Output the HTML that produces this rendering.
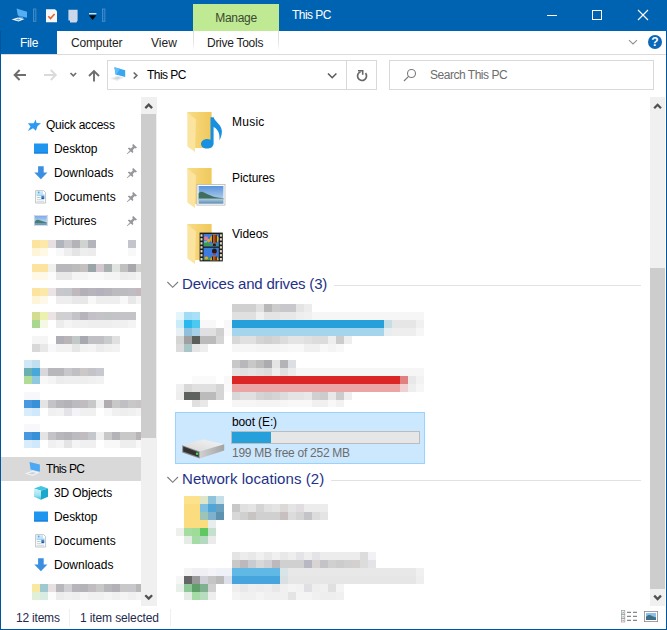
<!DOCTYPE html>
<html lang="en">
<head>
<meta charset="utf-8">
<title>This PC</title>
<style>
*{box-sizing:border-box;margin:0;padding:0}
html,body{width:667px;height:630px;overflow:hidden;background:#fff}
body{font-family:"Liberation Sans",sans-serif;font-size:12px;color:#000;position:relative}
.abs{position:absolute}
.t{position:absolute;white-space:nowrap;line-height:16px;height:16px}
#win{position:absolute;left:0;top:0;width:667px;height:630px;background:#fff;overflow:hidden}
#title{left:0;top:0;width:667px;height:31px;background:#0063b1}
#filetab{left:0;top:31px;width:57px;height:23px;background:#0063b1}
#manage{left:193px;top:4px;width:86px;height:27px;background:#bfe992}
#bl{left:0;top:31px;width:1px;height:599px;background:#00559f}
#br{left:666px;top:31px;width:1px;height:599px;background:#00559f}
#bb{left:0;top:629px;width:667px;height:1px;background:#00559f}
.line{position:absolute;background:#e2e2e2}
.box{position:absolute;border:1px solid #d9d9d9;background:#fff}
.nav .t{color:#000}
.hdr{position:absolute;white-space:nowrap;color:#1e3287;font-size:15px;line-height:20px;height:20px}
svg{position:absolute;overflow:visible}
</style>
</head>
<body>
<div id="win">
<!-- title bar -->
<div id="title" class="abs"></div>
<div id="manage" class="abs"></div>
<div class="t" style="left:215px;top:10px;color:#3b4a33;width:42px;text-align:center;letter-spacing:-0.295px">Manage</div>
<div class="t" style="left:292px;top:7px;color:#fff;letter-spacing:-0.548px">This PC</div>
<!-- QAT icons -->
<svg style="left:0;top:0" width="120" height="31" viewBox="0 0 120 31">
 <!-- pc icon -->
 <path d="M16.6 8.5 L27 11.7 L27 17.8 L17.8 15.6 Z" fill="#56aef2"/>
 <path d="M19.4 16 L23.4 17 L22.6 18.6 L18.8 17.8 Z" fill="#4a9be0"/>
 <path d="M11.6 19.6 L17.8 17.4 L24.6 18.9 L18.6 21.6 Z" fill="#f2f6fa"/>
 <path d="M15.4 19.5 L18.2 18.5 L21 19.2 L18.4 20.4 Z" fill="#6aa6de"/>
 <rect x="33.5" y="9" width="2.4" height="12.3" fill="#0f6cb8" stroke="#4f93cf" stroke-width="0.8"/>
 <!-- properties icon -->
 <path d="M46 9.2 H55 L57 11.2 V22.2 H46 Z" fill="#f6f7f9"/>
 <path d="M48.3 16.2 L50.5 18.6 L54.6 14" fill="none" stroke="#e8622a" stroke-width="1.6"/>
 <!-- new folder icon -->
 <path d="M68.4 9.8 H77.6 V20.6 L76.4 22.4 H70 V20.4 H68.4 Z" fill="#cdd7ea"/>
 <!-- dropdown -->
 <rect x="89" y="13.2" width="7.4" height="1.1" fill="#fff"/>
 <path d="M88.8 15.2 H96.4 L92.6 20 Z" fill="#0a0a0a"/>
 <rect x="102.5" y="9" width="2.4" height="12.3" fill="#0f6cb8" stroke="#4f93cf" stroke-width="0.8"/>
</svg>
<!-- window controls -->
<svg style="left:540px;top:0" width="127" height="31" viewBox="540 0 127 31">
 <rect x="547" y="15" width="10" height="1" fill="#fff"/>
 <rect x="592.5" y="10.5" width="9" height="9" fill="none" stroke="#fff" stroke-width="1"/>
 <path d="M638 10 L648 20 M648 10 L638 20" stroke="#fff" stroke-width="1.1" fill="none"/>
</svg>
<!-- ribbon tabs -->
<div id="filetab" class="abs"></div>
<div class="t" style="left:20px;top:35px;color:#fff;letter-spacing:-0.315px">File</div>
<div class="t" style="left:71px;top:35px;color:#222;letter-spacing:-0.184px">Computer</div>
<div class="t" style="left:151px;top:35px;color:#222;letter-spacing:0.034px">View</div>
<div class="t" style="left:207px;top:35px;color:#222;letter-spacing:-0.274px">Drive Tools</div>
<div class="abs" style="left:193px;top:31px;width:1px;height:20px;background:linear-gradient(#dcdcdc,#e6e6e6 60%,#fff)"></div>
<div class="abs" style="left:278px;top:31px;width:1px;height:20px;background:linear-gradient(#dcdcdc,#e6e6e6 60%,#fff)"></div>
<svg style="left:620px;top:31px" width="46" height="23" viewBox="620 31 46 23">
 <path d="M629 40.2 L633 44 L637 40.2" fill="none" stroke="#909090" stroke-width="1.1"/>
 <circle cx="655" cy="42" r="7" fill="#0b67b8"/>
 <text x="655" y="46.3" text-anchor="middle" font-family="Liberation Sans, sans-serif" font-weight="bold" font-size="12" fill="#fff">?</text>
</svg>
<div class="line" style="left:1px;top:54px;width:665px;height:1px;background:#dadbdc"></div>
<!-- address row -->
<svg style="left:0;top:55px" width="110" height="40" viewBox="0 55 110 40">
 <path d="M26 75 H15 M19.6 70 L14.6 75 L19.6 80" fill="none" stroke="#6e6e6e" stroke-width="1.9"/>
 <path d="M44 75 H55.4 M50.8 70 L55.8 75 L50.8 80" fill="none" stroke="#dadada" stroke-width="1.9"/>
 <path d="M70.5 73 L73.3 75.8 L76.1 73" fill="none" stroke="#6e6e6e" stroke-width="1.7"/>
 <path d="M94 81.4 V71.4 M89 76 L94 71 L99 76" fill="none" stroke="#6e6e6e" stroke-width="1.9"/>
</svg>
<div class="box" style="left:107px;top:60px;width:270px;height:30px"></div>
<div class="line" style="left:346px;top:61px;width:1px;height:28px;background:#d9d9d9"></div>
<svg style="left:107px;top:60px" width="270" height="30" viewBox="107 60 270 30">
 <!-- pc icon -->
 <path d="M114.4 67.2 L125.2 70.2 L125.2 76.9 L115.6 74.5 Z" fill="#38a6f3"/>
 <path d="M114.4 67.2 L120 68.8 L116.4 74.6 L115.6 74.5 Z" fill="#62bcf7"/>
 <path d="M110.2 78.4 L117.8 75.4 L124.2 77.4 L117 80.9 Z" fill="#ececee"/>
 <path d="M113.6 78.4 L117.6 76.8 L120.8 77.8 L117.2 79.5 Z" fill="#ccd6de"/>
 <path d="M133.7 72.5 L136.8 75.5 L133.7 78.5" fill="none" stroke="#6a6a6a" stroke-width="1.7"/>
 <path d="M328 73.5 L332.2 77.7 L336.4 73.5" fill="none" stroke="#5a5a5a" stroke-width="1.6"/>
 <path d="M365.5 73.1 A4.5 4.5 0 1 1 360.6 71.7" fill="none" stroke="#666" stroke-width="1.7"/>
 <path d="M358 70.7 H362.7 V74.8" fill="none" stroke="#666" stroke-width="1.6"/>
</svg>
<div class="t" style="left:147px;top:67px;letter-spacing:-0.548px">This PC</div>
<div class="box" style="left:389px;top:60px;width:265px;height:30px"></div>
<svg style="left:389px;top:60px" width="60" height="30" viewBox="389 60 60 30">
 <circle cx="411.5" cy="73.5" r="4" fill="none" stroke="#7a7a7a" stroke-width="1.1"/>
 <path d="M408.6 76.4 L404 81" stroke="#7a7a7a" stroke-width="1.2"/>
</svg>
<div class="t" style="left:430px;top:67px;color:#6d6d6d;letter-spacing:-0.478px">Search This PC</div>

<!-- nav pane -->
<div class="abs" style="left:1px;top:457px;width:140px;height:24px;background:#d9d9d9"></div>
<div class="abs" style="left:141px;top:97px;width:16px;height:509px;background:#f0f0f0"></div>
<div class="abs" style="left:141px;top:114px;width:15px;height:324px;background:#cdcdcd"></div>
<svg style="left:141px;top:97px" width="16" height="509" viewBox="141 97 16 509">
 <path d="M145.3 108.1 L148.7 104.7 L152.1 108.1" fill="none" stroke="#505050" stroke-width="2.3"/>
 <path d="M145.3 595.2 L148.7 598.6 L152.1 595.2" fill="none" stroke="#505050" stroke-width="2.3"/>
</svg>
<div class="nav">
<div class="t" style="left:46px;top:117px;letter-spacing:-0.224px">Quick access</div>
<div class="t" style="left:54px;top:141px;letter-spacing:-0.105px">Desktop</div>
<div class="t" style="left:54px;top:165px;letter-spacing:0.003px">Downloads</div>
<div class="t" style="left:54px;top:189px;letter-spacing:0.125px">Documents</div>
<div class="t" style="left:54px;top:213px;letter-spacing:-0.137px">Pictures</div>
<div class="t" style="left:46px;top:461px;letter-spacing:-0.615px">This PC</div>
<div class="t" style="left:54px;top:485px;letter-spacing:-0.129px">3D Objects</div>
<div class="t" style="left:54px;top:509px;letter-spacing:-0.105px">Desktop</div>
<div class="t" style="left:54px;top:533px;letter-spacing:0.125px">Documents</div>
<div class="t" style="left:54px;top:557px;letter-spacing:0.003px">Downloads</div>
</div>
<svg style="left:0;top:0" width="160" height="630" viewBox="0 0 160 630">
<!-- star -->
<path d="M35.5 119.4 L36.6 123.1 L41 123.2 L37.6 126 L35.9 130.8 L33.1 128.3 L27.9 131 L30.5 126.4 L27.9 123.2 L33.8 123.2 Z" fill="#2b9af0"/>
<!-- desktop -->
<rect x="34" y="143.5" width="14" height="10" fill="#1e96f0"/><rect x="34" y="152.3" width="14" height="1.2" fill="#167fd6"/>
<rect x="34" y="511.5" width="14" height="10" fill="#1e96f0"/><rect x="34" y="520.3" width="14" height="1.2" fill="#167fd6"/>
<!-- downloads -->
<path d="M38.1 166.2 H43.7 V172.6 H47.4 L40.9 179.3 L34.3 172.6 H38.1 Z" fill="#3c8fe0"/>
<path d="M38.1 558.2 H43.7 V564.6 H47.4 L40.9 571.3 L34.3 564.6 H38.1 Z" fill="#3c8fe0"/>
<!-- documents -->
<g id="doc"><path d="M35.6 190.6 H43.6 L45.6 192.6 V203 H35.6 Z" fill="#fafcfe" stroke="#b4b8bc" stroke-width="0.8"/>
<rect x="36.4" y="191.4" width="6.6" height="3" fill="#c4e4f8"/><rect x="38" y="191.6" width="1.4" height="1.6" fill="#5c9cdc"/><rect x="36.6" y="194.6" width="7.8" height="1.1" fill="#7cc8e8"/><rect x="41.2" y="195.8" width="3.2" height="3.2" fill="#4c8cd0"/><rect x="42" y="197.6" width="1.6" height="1.4" fill="#1c4c8c"/><rect x="37" y="197" width="3.6" height="0.9" fill="#b4c4c8"/><rect x="37" y="199" width="7" height="0.9" fill="#c8d4dc"/><rect x="37" y="200.8" width="7" height="0.9" fill="#c8d4dc"/></g>
<use href="#doc" y="344"/>
<!-- pictures -->
<defs><linearGradient id="nsky" x1="0" x2="0" y1="0" y2="1"><stop offset="0" stop-color="#7cacec"/><stop offset="1" stop-color="#d8e8f4"/></linearGradient></defs>
<rect x="34.3" y="215.5" width="13.4" height="10.2" fill="#f4f6f8" stroke="#c8ccd4" stroke-width="0.7"/>
<rect x="34.8" y="216" width="12" height="9" fill="url(#nsky)"/>
<path d="M34.8 221.4 C36.4 219.2 38.4 219.2 40.4 220.6 L46.8 222.6 V223.6 H34.8 Z" fill="#4c7c6c"/>
<rect x="34.8" y="223" width="12" height="2" fill="#6c9cc0"/>
<!-- pins -->
<g id="pin" fill="#96969b"><path d="M133.2 143.9 L137 147.4 L135.8 148.6 L134.7 148.1 L132.7 150.1 L133.4 152 L132.4 152.9 L127.9 148.6 L128.9 147.6 L130.9 148.4 L132.9 146.4 L132.2 145.1 Z"/><path d="M130.3 150.2 L131 150.9 L127 154 Z" stroke="#96969b" stroke-width="0.5"/></g>
<use href="#pin" y="24"/><use href="#pin" y="48"/><use href="#pin" y="72"/>
<!-- this pc -->
<path d="M29.5 462 L39.9 464.5 L39.9 471.8 L30.6 469.4 Z" fill="#4aa8f4"/>
<path d="M24.8 473.6 L32.6 470.6 L39.6 472.6 L32.6 476 Z" fill="#eef0f2"/>
<path d="M28.4 473.6 L32.6 472 L36 473 L32.4 474.6 Z" fill="#c4d4e0"/>
<!-- 3d objects -->
<defs><linearGradient id="cubeL" x1="0" x2="0" y1="0" y2="1"><stop offset="0" stop-color="#d0f4fa"/><stop offset="0.6" stop-color="#a0e4f0"/><stop offset="1" stop-color="#38bcd4"/></linearGradient></defs>
<path d="M34 488.4 L41 486 L48 488.4 L41 490.8 Z" fill="#44c4e0"/>
<path d="M34 488.4 L41 490.8 V499.7 L34 496.8 Z" fill="url(#cubeL)"/>
<path d="M48 488.4 L41 490.8 V499.7 L48 496.8 Z" fill="#1ca8cc"/>
</svg>

<!-- main pane -->
<div class="abs" style="left:650px;top:97px;width:15px;height:509px;background:#f0f0f0"></div>
<div class="abs" style="left:650px;top:268px;width:15px;height:321px;background:#cdcdcd"></div>
<svg style="left:650px;top:97px" width="15" height="509" viewBox="650 97 15 509">
 <path d="M654.2 108.2 L657.6 104.8 L661 108.2" fill="none" stroke="#505050" stroke-width="2.3"/>
 <path d="M654.2 595.6 L657.6 599 L661 595.6" fill="none" stroke="#505050" stroke-width="2.3"/>
</svg>
<div class="t" style="left:232px;top:114px;letter-spacing:0.239px">Music</div>
<div class="t" style="left:232px;top:170px;letter-spacing:-0.080px">Pictures</div>
<div class="t" style="left:232px;top:226px;letter-spacing:-0.037px">Videos</div>
<div class="abs" style="left:175px;top:412px;width:250px;height:52px;background:#cce8ff;border:1px solid #99d1ff"></div>
<svg style="left:0;top:0" width="667" height="630" viewBox="0 0 667 630">
<g transform="translate(187,112)">
 <defs><linearGradient id="fg187112" x1="0" x2="1" y1="0" y2="0"><stop offset="0" stop-color="#f8dc84"/><stop offset="1" stop-color="#f0c85c"/></linearGradient></defs>
 <path d="M0.4 0 H24.6 V36 H6 Z" fill="url(#fg187112)"/>
 <path d="M0.4 0 L9 7.5 L8 40 L0.4 34.5 Z" fill="#fbe3a0"/>
</g><g transform="translate(187,168)">
 <defs><linearGradient id="fg187168" x1="0" x2="1" y1="0" y2="0"><stop offset="0" stop-color="#f8dc84"/><stop offset="1" stop-color="#f0c85c"/></linearGradient></defs>
 <path d="M0.4 0 H24.6 V36 H6 Z" fill="url(#fg187168)"/>
 <path d="M0.4 0 L9 7.5 L8 40 L0.4 34.5 Z" fill="#fbe3a0"/>
</g><g transform="translate(187,224)">
 <defs><linearGradient id="fg187224" x1="0" x2="1" y1="0" y2="0"><stop offset="0" stop-color="#f8dc84"/><stop offset="1" stop-color="#f0c85c"/></linearGradient></defs>
 <path d="M0.4 0 H24.6 V36 H6 Z" fill="url(#fg187224)"/>
 <path d="M0.4 0 L9 7.5 L8 40 L0.4 34.5 Z" fill="#fbe3a0"/>
</g>
<path d="M210.5 117.2 L213.6 117.2 C214.5 121.5 221.9 124.5 221.9 131.5 C221.9 135 220.8 138 219.3 140.2 C220.2 135.5 218.8 129.5 213.6 127 L213.6 143.5 C213.6 146.5 210.5 148.6 206.8 148.6 C203.4 148.6 201 146.6 201 144 C201 141.2 203.8 139 207.2 139 C208.5 139 209.6 139.3 210.5 139.8 Z" fill="#1790e0"/>

<rect x="197" y="184.5" width="28" height="20.6" fill="#fdfdfd" stroke="#b4b8bc" stroke-width="0.8"/>
<defs><linearGradient id="sky" x1="0" x2="0" y1="0" y2="1"><stop offset="0" stop-color="#5a94dc"/><stop offset="1" stop-color="#cce0f0"/></linearGradient>
<linearGradient id="wat" x1="0" x2="0" y1="0" y2="1"><stop offset="0" stop-color="#b4d0e4"/><stop offset="1" stop-color="#5c8cb4"/></linearGradient>
<clipPath id="f1"><rect x="203.6" y="234" width="15.2" height="12.4"/></clipPath><clipPath id="f2"><rect x="203.6" y="247.8" width="15.2" height="12.4"/></clipPath></defs>
<rect x="198.6" y="186" width="24.8" height="17.6" fill="url(#sky)"/>
<path d="M198.6 193.4 C200 191.6 202 191.4 204 192.6 C208 194.6 212 196.6 216 197.2 L223.4 198.2 V199.4 H198.6 Z" fill="#3f6f5c"/>
<rect x="198.6" y="198.6" width="24.8" height="5" fill="url(#wat)"/>

<rect x="199.6" y="232.6" width="23.2" height="28.8" fill="#1c1c1c"/>
<rect x="203.6" y="234" width="15.2" height="12.4" fill="#3c7ce0"/>
<rect x="203.6" y="247.8" width="15.2" height="12.4" fill="#3c7ce0"/>
<g clip-path="url(#f1)">
<path d="M203.6 243 L207 241.6 L210 244 L213 245.4 L218.8 245 V246.4 H203.6 Z" fill="#3c9c4c"/>
<ellipse cx="206" cy="238.4" rx="2" ry="2.2" fill="#e87888"/><ellipse cx="208.6" cy="240.6" rx="1.6" ry="1.8" fill="#f0a030"/><rect x="204" y="241" width="3" height="1.6" fill="#58c8d8"/>
<ellipse cx="214.4" cy="238.8" rx="4.3" ry="4.4" fill="#f0b418"/>
<rect x="211.9" y="234.8" width="1.5" height="8" fill="#2c1c10"/><rect x="215.3" y="234.8" width="1.5" height="8" fill="#2c1c10"/><rect x="213.7" y="234.4" width="1.3" height="8.8" fill="#d83818"/>
<rect x="213" y="243.6" width="2.8" height="2.4" fill="#281810"/>
</g>
<g clip-path="url(#f2)">
<path d="M203.6 257.4 L207 256 L210 258.2 L218.8 259.4 V260.2 H203.6 Z" fill="#3c9c4c"/>
<ellipse cx="214.4" cy="251" rx="2.4" ry="2.6" fill="#281810"/><rect x="213.4" y="253" width="2" height="2" fill="#c83020"/>
<ellipse cx="214.4" cy="260.6" rx="4.3" ry="4.4" fill="#f0b418"/><rect x="211.9" y="256.4" width="1.5" height="5" fill="#2c1c10"/><rect x="215.3" y="256.4" width="1.5" height="5" fill="#2c1c10"/><rect x="213.7" y="256.2" width="1.3" height="5" fill="#d83818"/>
<ellipse cx="206.4" cy="258" rx="1.8" ry="1.6" fill="#f0a030"/>
</g>
<rect x="200.5" y="234.3" width="2" height="2.3" fill="#e8dcb8"/><rect x="219.9" y="234.3" width="2" height="2.3" fill="#e8dcb8"/>
<rect x="200.5" y="238.2" width="2" height="2.3" fill="#e8dcb8"/><rect x="219.9" y="238.2" width="2" height="2.3" fill="#e8dcb8"/>
<rect x="200.5" y="242.2" width="2" height="2.3" fill="#e8dcb8"/><rect x="219.9" y="242.2" width="2" height="2.3" fill="#e8dcb8"/>
<rect x="200.5" y="246.2" width="2" height="2.3" fill="#e8dcb8"/><rect x="219.9" y="246.2" width="2" height="2.3" fill="#e8dcb8"/>
<rect x="200.5" y="250.1" width="2" height="2.3" fill="#e8dcb8"/><rect x="219.9" y="250.1" width="2" height="2.3" fill="#e8dcb8"/>
<rect x="200.5" y="254.1" width="2" height="2.3" fill="#e8dcb8"/><rect x="219.9" y="254.1" width="2" height="2.3" fill="#e8dcb8"/>
<rect x="200.5" y="258.0" width="2" height="2.3" fill="#e8dcb8"/><rect x="219.9" y="258.0" width="2" height="2.3" fill="#e8dcb8"/>

<defs><linearGradient id="dtop" x1="0" x2="1" y1="1" y2="0"><stop offset="0" stop-color="#d8d8d8"/><stop offset="1" stop-color="#f4f4f4"/></linearGradient>
<linearGradient id="dside" x1="0" x2="1" y1="0" y2="0"><stop offset="0" stop-color="#d0d0d0"/><stop offset="1" stop-color="#a4a4a4"/></linearGradient></defs>
<path d="M182.2 445.2 L203 439.6 L224.2 444.3 L199.7 451.5 Z" fill="url(#dtop)"/>
<path d="M199.7 451.5 L224.2 444.3 L224.2 450.6 L199.7 458.6 Z" fill="url(#dside)"/>
<path d="M182.2 445.2 L199.7 451.5 L199.7 458.6 L182.2 452.6 Z" fill="#8a8a8a"/>
<path d="M183.2 446.6 L198.7 452.2 L198.7 457 L183.2 451.6 Z" fill="#333"/>
<rect x="196" y="452.6" width="2.2" height="2.2" fill="#48e048"/>
</svg>
<div class="hdr" style="left:182px;top:274px;letter-spacing:-0.187px">Devices and drives (3)</div>
<div class="line" style="left:334px;top:285px;width:307px;height:1px"></div>
<div class="hdr" style="left:182px;top:469px;letter-spacing:0.065px">Network locations (2)</div>
<div class="line" style="left:331px;top:480px;width:310px;height:1px"></div>
<svg style="left:160px;top:270px" width="30" height="230" viewBox="160 270 30 230">
 <path d="M167.4 282 L172.7 287.3 L178 282" fill="none" stroke="#7a7a7a" stroke-width="1.1"/>
 <path d="M167.4 477 L172.7 482.3 L178 477" fill="none" stroke="#7a7a7a" stroke-width="1.1"/>
</svg>
<!-- selected drive -->
<div class="t" style="left:232px;top:414px;letter-spacing:-0.116px">boot (E:)</div>
<div class="abs" style="left:231px;top:431px;width:189px;height:13px;background:#e6e6e6;border:1px solid #bcbcbc"></div>
<div class="abs" style="left:232px;top:432px;width:39px;height:11px;background:#26a0da"></div>
<div class="t" style="left:232px;top:445px;color:#6d6d6d;letter-spacing:-0.265px">199 MB free of 252 MB</div>
<svg style="left:0;top:0" width="667" height="630" viewBox="0 0 667 630" shape-rendering="crispEdges">
<rect x="32" y="240" width="8" height="8" fill="#fce4a0"/>
<rect x="40" y="240" width="8" height="8" fill="#fce8a8"/>
<rect x="48" y="240" width="8" height="8" fill="#e8e0e0"/>
<rect x="56" y="240" width="8" height="8" fill="#b0b4bc"/>
<rect x="64" y="240" width="8" height="8" fill="#c8c8cc"/>
<rect x="72" y="240" width="8" height="8" fill="#b4b4b8"/>
<rect x="80" y="240" width="8" height="8" fill="#d0d4d0"/>
<rect x="88" y="240" width="8" height="8" fill="#b4b4bc"/>
<rect x="128" y="240" width="8" height="8" fill="#c4c4cc"/>
<rect x="32" y="248" width="8" height="8" fill="#fef4d8"/>
<rect x="40" y="248" width="8" height="8" fill="#fef8e4"/>
<rect x="56" y="248" width="8" height="8" fill="#f8f8f8"/>
<rect x="64" y="248" width="8" height="8" fill="#eeeeee"/>
<rect x="72" y="248" width="8" height="8" fill="#e4e4e4"/>
<rect x="80" y="248" width="8" height="8" fill="#eeeeee"/>
<rect x="88" y="248" width="8" height="8" fill="#ececec"/>
<rect x="128" y="248" width="8" height="8" fill="#f8f8f8"/>
<rect x="32" y="264" width="8" height="8" fill="#fce4a0"/>
<rect x="40" y="264" width="8" height="8" fill="#fce4a0"/>
<rect x="48" y="264" width="8" height="8" fill="#f0f0ec"/>
<rect x="56" y="264" width="8" height="8" fill="#b8b8bc"/>
<rect x="64" y="264" width="8" height="8" fill="#b8b8bc"/>
<rect x="72" y="264" width="8" height="8" fill="#bcbcbc"/>
<rect x="80" y="264" width="8" height="8" fill="#c4c0c0"/>
<rect x="88" y="264" width="8" height="8" fill="#98a4a8"/>
<rect x="96" y="264" width="8" height="8" fill="#d4c8d0"/>
<rect x="104" y="264" width="8" height="8" fill="#a8b0b0"/>
<rect x="112" y="264" width="8" height="8" fill="#e0e4e0"/>
<rect x="120" y="264" width="8" height="8" fill="#c0c0c0"/>
<rect x="128" y="264" width="8" height="8" fill="#a8a8ac"/>
<rect x="136" y="264" width="5" height="8" fill="#d0d0cc"/>
<rect x="32" y="272" width="8" height="8" fill="#fef8e4"/>
<rect x="40" y="272" width="8" height="8" fill="#fef8e8"/>
<rect x="48" y="272" width="8" height="8" fill="#fcfcfc"/>
<rect x="56" y="272" width="8" height="8" fill="#e8e8e8"/>
<rect x="64" y="272" width="8" height="8" fill="#e8e8e8"/>
<rect x="72" y="272" width="8" height="8" fill="#f4f4f4"/>
<rect x="80" y="272" width="8" height="8" fill="#f4f4f4"/>
<rect x="88" y="272" width="8" height="8" fill="#f8f8f8"/>
<rect x="96" y="272" width="8" height="8" fill="#f8f8f8"/>
<rect x="104" y="272" width="8" height="8" fill="#f4f4f4"/>
<rect x="112" y="272" width="8" height="8" fill="#f4f4f4"/>
<rect x="120" y="272" width="8" height="8" fill="#ececec"/>
<rect x="128" y="272" width="8" height="8" fill="#eeeeee"/>
<rect x="136" y="272" width="5" height="8" fill="#f4f4f4"/>
<rect x="32" y="288" width="8" height="8" fill="#fce4a0"/>
<rect x="40" y="288" width="8" height="8" fill="#fce8a8"/>
<rect x="48" y="288" width="8" height="8" fill="#ece4e4"/>
<rect x="56" y="288" width="8" height="8" fill="#c8c8cc"/>
<rect x="64" y="288" width="8" height="8" fill="#c4c8cc"/>
<rect x="72" y="288" width="8" height="8" fill="#c0b8bc"/>
<rect x="80" y="288" width="8" height="8" fill="#b4b0b8"/>
<rect x="88" y="288" width="8" height="8" fill="#b8b4bc"/>
<rect x="96" y="288" width="8" height="8" fill="#b4b0bc"/>
<rect x="104" y="288" width="8" height="8" fill="#b8b4bc"/>
<rect x="112" y="288" width="8" height="8" fill="#bcbcc0"/>
<rect x="120" y="288" width="8" height="8" fill="#bcbcc0"/>
<rect x="128" y="288" width="8" height="8" fill="#c0bcc4"/>
<rect x="136" y="288" width="5" height="8" fill="#c4b8bc"/>
<rect x="32" y="296" width="8" height="8" fill="#fef4d8"/>
<rect x="40" y="296" width="8" height="8" fill="#fef8e8"/>
<rect x="56" y="296" width="8" height="8" fill="#eeeeee"/>
<rect x="64" y="296" width="8" height="8" fill="#eeeeee"/>
<rect x="72" y="296" width="8" height="8" fill="#e8e8e8"/>
<rect x="80" y="296" width="8" height="8" fill="#e8e8e8"/>
<rect x="88" y="296" width="8" height="8" fill="#f8f8f8"/>
<rect x="96" y="296" width="8" height="8" fill="#eeeeee"/>
<rect x="104" y="296" width="8" height="8" fill="#eeeeee"/>
<rect x="112" y="296" width="8" height="8" fill="#eeeeee"/>
<rect x="120" y="296" width="8" height="8" fill="#f8f8f8"/>
<rect x="128" y="296" width="8" height="8" fill="#e8e8e8"/>
<rect x="136" y="296" width="5" height="8" fill="#f4f4f4"/>
<rect x="32" y="312" width="8" height="8" fill="#d4dc90"/>
<rect x="40" y="312" width="8" height="8" fill="#ecf0b0"/>
<rect x="48" y="312" width="8" height="8" fill="#ece4e4"/>
<rect x="56" y="312" width="8" height="8" fill="#d0d0d0"/>
<rect x="64" y="312" width="8" height="8" fill="#d0d0d4"/>
<rect x="72" y="312" width="8" height="8" fill="#c4c4c8"/>
<rect x="80" y="312" width="8" height="8" fill="#b8b4bc"/>
<rect x="88" y="312" width="8" height="8" fill="#c4c0c8"/>
<rect x="96" y="312" width="8" height="8" fill="#c4c4c8"/>
<rect x="104" y="312" width="8" height="8" fill="#c0c4c4"/>
<rect x="112" y="312" width="8" height="8" fill="#c4c4c8"/>
<rect x="120" y="312" width="8" height="8" fill="#c4c4c8"/>
<rect x="128" y="312" width="8" height="8" fill="#c4c4c8"/>
<rect x="32" y="320" width="8" height="8" fill="#a8d890"/>
<rect x="40" y="320" width="8" height="8" fill="#f4f8e4"/>
<rect x="56" y="320" width="8" height="8" fill="#ececec"/>
<rect x="64" y="320" width="8" height="8" fill="#f4f4f4"/>
<rect x="72" y="320" width="8" height="8" fill="#f0f0f0"/>
<rect x="80" y="320" width="8" height="8" fill="#f0f0f0"/>
<rect x="88" y="320" width="8" height="8" fill="#eeeeee"/>
<rect x="96" y="320" width="8" height="8" fill="#eeeeee"/>
<rect x="104" y="320" width="8" height="8" fill="#eeeeee"/>
<rect x="112" y="320" width="8" height="8" fill="#f0f0f0"/>
<rect x="120" y="320" width="8" height="8" fill="#f0f0f0"/>
<rect x="128" y="320" width="8" height="8" fill="#f4f4f4"/>
<rect x="32" y="336" width="8" height="8" fill="#f5f5f5"/>
<rect x="40" y="336" width="8" height="8" fill="#f5f5f5"/>
<rect x="56" y="336" width="8" height="8" fill="#b0afb8"/>
<rect x="64" y="336" width="8" height="8" fill="#b8b4b8"/>
<rect x="72" y="336" width="8" height="8" fill="#c0c8c8"/>
<rect x="80" y="336" width="8" height="8" fill="#a8a8b0"/>
<rect x="88" y="336" width="8" height="8" fill="#c0c0c4"/>
<rect x="96" y="336" width="8" height="8" fill="#c0c0c4"/>
<rect x="104" y="336" width="8" height="8" fill="#c8cccc"/>
<rect x="112" y="336" width="8" height="8" fill="#e0e0e0"/>
<rect x="32" y="344" width="8" height="8" fill="#d8d8d8"/>
<rect x="40" y="344" width="8" height="8" fill="#e8e8e8"/>
<rect x="48" y="344" width="8" height="8" fill="#f8f8f8"/>
<rect x="56" y="344" width="8" height="8" fill="#f2f2f2"/>
<rect x="64" y="344" width="8" height="8" fill="#f2f2f2"/>
<rect x="72" y="344" width="8" height="8" fill="#e6e6e6"/>
<rect x="80" y="344" width="8" height="8" fill="#f2f2f2"/>
<rect x="88" y="344" width="8" height="8" fill="#f4f4f4"/>
<rect x="96" y="344" width="8" height="8" fill="#ececec"/>
<rect x="104" y="344" width="8" height="8" fill="#f0f0f0"/>
<rect x="112" y="344" width="8" height="8" fill="#f2f2f2"/>
<rect x="24" y="360" width="8" height="8" fill="#d0e8f5"/>
<rect x="32" y="360" width="8" height="8" fill="#c0e0f0"/>
<rect x="24" y="368" width="8" height="8" fill="#6ab0b0"/>
<rect x="32" y="368" width="8" height="8" fill="#48a8d8"/>
<rect x="40" y="368" width="8" height="8" fill="#d8d8dc"/>
<rect x="48" y="368" width="8" height="8" fill="#b8b8bc"/>
<rect x="56" y="368" width="8" height="8" fill="#b8b8bc"/>
<rect x="64" y="368" width="8" height="8" fill="#c8c8cc"/>
<rect x="72" y="368" width="8" height="8" fill="#c0c0c4"/>
<rect x="80" y="368" width="8" height="8" fill="#ccc8c8"/>
<rect x="88" y="368" width="8" height="8" fill="#c4c4c8"/>
<rect x="96" y="368" width="8" height="8" fill="#c8c8d0"/>
<rect x="24" y="376" width="8" height="8" fill="#b0dc98"/>
<rect x="32" y="376" width="8" height="8" fill="#90c8e0"/>
<rect x="40" y="376" width="8" height="8" fill="#f8f8f8"/>
<rect x="48" y="376" width="8" height="8" fill="#f4f4f4"/>
<rect x="56" y="376" width="8" height="8" fill="#ececec"/>
<rect x="64" y="376" width="8" height="8" fill="#eeeeee"/>
<rect x="72" y="376" width="8" height="8" fill="#eeeeee"/>
<rect x="80" y="376" width="8" height="8" fill="#eeeeee"/>
<rect x="88" y="376" width="8" height="8" fill="#f0f0f0"/>
<rect x="96" y="376" width="8" height="8" fill="#f2f2f2"/>
<rect x="24" y="392" width="8" height="8" fill="#f8f8fc"/>
<rect x="32" y="392" width="8" height="8" fill="#f8f8fc"/>
<rect x="24" y="400" width="8" height="8" fill="#4898e0"/>
<rect x="32" y="400" width="8" height="8" fill="#3890d8"/>
<rect x="40" y="400" width="8" height="8" fill="#e4e4e4"/>
<rect x="48" y="400" width="8" height="8" fill="#c4c4c8"/>
<rect x="56" y="400" width="8" height="8" fill="#b8b8bc"/>
<rect x="64" y="400" width="8" height="8" fill="#b4b4b8"/>
<rect x="72" y="400" width="8" height="8" fill="#bcbcc0"/>
<rect x="80" y="400" width="8" height="8" fill="#c0bcc0"/>
<rect x="88" y="400" width="8" height="8" fill="#c8c8c8"/>
<rect x="96" y="400" width="8" height="8" fill="#f0f0f0"/>
<rect x="104" y="400" width="8" height="8" fill="#b0acb0"/>
<rect x="112" y="400" width="8" height="8" fill="#c8c8c8"/>
<rect x="120" y="400" width="8" height="8" fill="#c0c0c4"/>
<rect x="128" y="400" width="8" height="8" fill="#c8c8c8"/>
<rect x="136" y="400" width="5" height="8" fill="#c8c4c4"/>
<rect x="24" y="408" width="8" height="8" fill="#d8ecfc"/>
<rect x="32" y="408" width="8" height="8" fill="#d0e8fc"/>
<rect x="48" y="408" width="8" height="8" fill="#f0f0f0"/>
<rect x="56" y="408" width="8" height="8" fill="#f2f2f2"/>
<rect x="64" y="408" width="8" height="8" fill="#e4e4e8"/>
<rect x="72" y="408" width="8" height="8" fill="#f4f4f8"/>
<rect x="80" y="408" width="8" height="8" fill="#f0f0f0"/>
<rect x="88" y="408" width="8" height="8" fill="#f0f0f0"/>
<rect x="104" y="408" width="8" height="8" fill="#f8f8f8"/>
<rect x="112" y="408" width="8" height="8" fill="#f0f0f0"/>
<rect x="120" y="408" width="8" height="8" fill="#eeeeee"/>
<rect x="128" y="408" width="8" height="8" fill="#f0f0f0"/>
<rect x="136" y="408" width="5" height="8" fill="#f4f4f4"/>
<rect x="24" y="424" width="8" height="8" fill="#f8f8fc"/>
<rect x="32" y="424" width="8" height="8" fill="#f8f8fc"/>
<rect x="24" y="432" width="8" height="8" fill="#4898e0"/>
<rect x="32" y="432" width="8" height="8" fill="#3890d8"/>
<rect x="40" y="432" width="8" height="8" fill="#e4e4e4"/>
<rect x="48" y="432" width="8" height="8" fill="#c4c4c8"/>
<rect x="56" y="432" width="8" height="8" fill="#b8b8bc"/>
<rect x="64" y="432" width="8" height="8" fill="#b4b4b8"/>
<rect x="72" y="432" width="8" height="8" fill="#bcbcc0"/>
<rect x="80" y="432" width="8" height="8" fill="#c0bcc0"/>
<rect x="88" y="432" width="8" height="8" fill="#c4c8cc"/>
<rect x="96" y="432" width="8" height="8" fill="#f0f0f0"/>
<rect x="104" y="432" width="8" height="8" fill="#c8c8c8"/>
<rect x="112" y="432" width="8" height="8" fill="#b4b4b8"/>
<rect x="120" y="432" width="8" height="8" fill="#c8c8c8"/>
<rect x="128" y="432" width="8" height="8" fill="#c8c8c8"/>
<rect x="136" y="432" width="5" height="8" fill="#b8b4b8"/>
<rect x="24" y="440" width="8" height="8" fill="#d8ecfc"/>
<rect x="32" y="440" width="8" height="8" fill="#d0e8fc"/>
<rect x="48" y="440" width="8" height="8" fill="#f0f0f0"/>
<rect x="56" y="440" width="8" height="8" fill="#f4f4f4"/>
<rect x="64" y="440" width="8" height="8" fill="#e4e4e4"/>
<rect x="72" y="440" width="8" height="8" fill="#f4f4f4"/>
<rect x="80" y="440" width="8" height="8" fill="#f0f0f0"/>
<rect x="88" y="440" width="8" height="8" fill="#f0f0f0"/>
<rect x="104" y="440" width="8" height="8" fill="#f8f8f8"/>
<rect x="112" y="440" width="8" height="8" fill="#f8f8f8"/>
<rect x="120" y="440" width="8" height="8" fill="#eeeeee"/>
<rect x="128" y="440" width="8" height="8" fill="#eeeeee"/>
<rect x="136" y="440" width="5" height="8" fill="#f8f8f8"/>
<rect x="32" y="584" width="8" height="8" fill="#f8e8a0"/>
<rect x="40" y="584" width="8" height="8" fill="#a0c8d0"/>
<rect x="48" y="584" width="8" height="8" fill="#e8e0e0"/>
<rect x="56" y="584" width="8" height="8" fill="#b8b8bc"/>
<rect x="64" y="584" width="8" height="8" fill="#d0d0d4"/>
<rect x="72" y="584" width="8" height="8" fill="#b8b4bc"/>
<rect x="80" y="584" width="8" height="8" fill="#b4b4b8"/>
<rect x="88" y="584" width="8" height="8" fill="#c0bcc0"/>
<rect x="96" y="584" width="8" height="8" fill="#c8c8c8"/>
<rect x="104" y="584" width="8" height="8" fill="#b8b8bc"/>
<rect x="112" y="584" width="8" height="8" fill="#b4b0b8"/>
<rect x="120" y="584" width="8" height="8" fill="#c8c8c8"/>
<rect x="128" y="584" width="8" height="8" fill="#c8c8cc"/>
<rect x="136" y="584" width="5" height="8" fill="#b8b8b8"/>
<rect x="32" y="592" width="8" height="8" fill="#e0f0d8"/>
<rect x="40" y="592" width="8" height="8" fill="#d8ece4"/>
<rect x="48" y="592" width="8" height="8" fill="#fcfcfc"/>
<rect x="56" y="592" width="8" height="8" fill="#ececec"/>
<rect x="64" y="592" width="8" height="8" fill="#f0f0f0"/>
<rect x="72" y="592" width="8" height="8" fill="#eeeeee"/>
<rect x="80" y="592" width="8" height="8" fill="#f4f4f4"/>
<rect x="88" y="592" width="8" height="8" fill="#f0f0f0"/>
<rect x="96" y="592" width="8" height="8" fill="#f0f0f0"/>
<rect x="104" y="592" width="8" height="8" fill="#f4f4f4"/>
<rect x="112" y="592" width="8" height="8" fill="#f0f0f0"/>
<rect x="120" y="592" width="8" height="8" fill="#f4f4f4"/>
<rect x="128" y="592" width="8" height="8" fill="#f0f0f0"/>
<rect x="136" y="592" width="5" height="8" fill="#f4f4f4"/>
<rect x="176" y="312" width="8" height="8" fill="#e4f6fc"/>
<rect x="184" y="312" width="8" height="8" fill="#a0dcf4"/>
<rect x="192" y="312" width="8" height="8" fill="#a8e0f8"/>
<rect x="176" y="320" width="8" height="8" fill="#c8ecf8"/>
<rect x="184" y="320" width="8" height="8" fill="#2bb8ee"/>
<rect x="192" y="320" width="8" height="8" fill="#4cc9f0"/>
<rect x="200" y="320" width="8" height="8" fill="#f8f8f8"/>
<rect x="208" y="320" width="8" height="8" fill="#f8f8f8"/>
<rect x="176" y="328" width="8" height="8" fill="#e8f0f4"/>
<rect x="184" y="328" width="8" height="8" fill="#8fc0dc"/>
<rect x="192" y="328" width="8" height="8" fill="#a5d0e6"/>
<rect x="200" y="328" width="8" height="8" fill="#e0e0e4"/>
<rect x="208" y="328" width="8" height="8" fill="#e0e0e0"/>
<rect x="216" y="328" width="8" height="8" fill="#d0d0d0"/>
<rect x="176" y="336" width="8" height="8" fill="#d5d5d5"/>
<rect x="184" y="336" width="8" height="8" fill="#a0a0a0"/>
<rect x="192" y="336" width="8" height="8" fill="#5a5f5a"/>
<rect x="200" y="336" width="8" height="8" fill="#bbbbbb"/>
<rect x="208" y="336" width="8" height="8" fill="#bbbbbb"/>
<rect x="216" y="336" width="8" height="8" fill="#d5d5d5"/>
<rect x="176" y="344" width="8" height="8" fill="#dcdcdc"/>
<rect x="184" y="344" width="8" height="8" fill="#a8c5c8"/>
<rect x="192" y="344" width="8" height="8" fill="#e5e5e5"/>
<rect x="200" y="344" width="8" height="8" fill="#eeeeee"/>
<rect x="232" y="304" width="8" height="8" fill="#d0d0d0"/>
<rect x="240" y="304" width="8" height="8" fill="#d0d0d0"/>
<rect x="248" y="304" width="8" height="8" fill="#d0d0d0"/>
<rect x="256" y="304" width="8" height="8" fill="#e0e0e0"/>
<rect x="264" y="304" width="8" height="8" fill="#b8b8b8"/>
<rect x="272" y="304" width="8" height="8" fill="#cccccc"/>
<rect x="280" y="304" width="8" height="8" fill="#c8c8cc"/>
<rect x="288" y="304" width="8" height="8" fill="#c8c8cc"/>
<rect x="296" y="304" width="8" height="8" fill="#e4e4e4"/>
<rect x="304" y="304" width="8" height="8" fill="#ececec"/>
<rect x="232" y="312" width="8" height="8" fill="#e0e0e0"/>
<rect x="240" y="312" width="8" height="8" fill="#e0e0e0"/>
<rect x="248" y="312" width="8" height="8" fill="#e0e0e0"/>
<rect x="256" y="312" width="8" height="8" fill="#f0f0f0"/>
<rect x="264" y="312" width="8" height="8" fill="#e4e4e4"/>
<rect x="272" y="312" width="8" height="8" fill="#e4e4e4"/>
<rect x="280" y="312" width="8" height="8" fill="#e8e8e8"/>
<rect x="288" y="312" width="8" height="8" fill="#e8e8e8"/>
<rect x="296" y="312" width="8" height="8" fill="#eeeeee"/>
<rect x="304" y="312" width="8" height="8" fill="#f0f0f0"/>
<rect x="312" y="312" width="8" height="8" fill="#f6f6f6"/>
<rect x="320" y="312" width="8" height="8" fill="#f6f6f6"/>
<rect x="328" y="312" width="8" height="8" fill="#f6f6f6"/>
<rect x="336" y="312" width="8" height="8" fill="#f6f6f6"/>
<rect x="344" y="312" width="8" height="8" fill="#f6f6f6"/>
<rect x="352" y="312" width="8" height="8" fill="#f6f6f6"/>
<rect x="360" y="312" width="8" height="8" fill="#f6f6f6"/>
<rect x="368" y="312" width="8" height="8" fill="#f6f6f6"/>
<rect x="376" y="312" width="8" height="8" fill="#f6f6f6"/>
<rect x="384" y="312" width="8" height="8" fill="#f6f6f6"/>
<rect x="392" y="312" width="8" height="8" fill="#f6f6f6"/>
<rect x="400" y="312" width="8" height="8" fill="#f6f6f6"/>
<rect x="408" y="312" width="8" height="8" fill="#f6f6f6"/>
<rect x="416" y="312" width="8" height="8" fill="#f6f6f6"/>
<rect x="224" y="320" width="8" height="8" fill="#f8f8f8"/>
<rect x="232" y="320" width="8" height="8" fill="#26a0da"/>
<rect x="240" y="320" width="8" height="8" fill="#26a0da"/>
<rect x="248" y="320" width="8" height="8" fill="#26a0da"/>
<rect x="256" y="320" width="8" height="8" fill="#26a0da"/>
<rect x="264" y="320" width="8" height="8" fill="#26a0da"/>
<rect x="272" y="320" width="8" height="8" fill="#26a0da"/>
<rect x="280" y="320" width="8" height="8" fill="#26a0da"/>
<rect x="288" y="320" width="8" height="8" fill="#26a0da"/>
<rect x="296" y="320" width="8" height="8" fill="#26a0da"/>
<rect x="304" y="320" width="8" height="8" fill="#26a0da"/>
<rect x="312" y="320" width="8" height="8" fill="#26a0da"/>
<rect x="320" y="320" width="8" height="8" fill="#26a0da"/>
<rect x="328" y="320" width="8" height="8" fill="#26a0da"/>
<rect x="336" y="320" width="8" height="8" fill="#26a0da"/>
<rect x="344" y="320" width="8" height="8" fill="#26a0da"/>
<rect x="352" y="320" width="8" height="8" fill="#26a0da"/>
<rect x="360" y="320" width="8" height="8" fill="#26a0da"/>
<rect x="368" y="320" width="8" height="8" fill="#26a0da"/>
<rect x="376" y="320" width="8" height="8" fill="#26a0da"/>
<rect x="384" y="320" width="8" height="8" fill="#c5dde5"/>
<rect x="392" y="320" width="8" height="8" fill="#e6e6e6"/>
<rect x="400" y="320" width="8" height="8" fill="#e6e6e6"/>
<rect x="408" y="320" width="8" height="8" fill="#e6e6e6"/>
<rect x="416" y="320" width="8" height="8" fill="#f0f0f0"/>
<rect x="224" y="328" width="8" height="8" fill="#fafafa"/>
<rect x="232" y="328" width="8" height="8" fill="#a5d5ec"/>
<rect x="240" y="328" width="8" height="8" fill="#a5d5ec"/>
<rect x="248" y="328" width="8" height="8" fill="#a5d5ec"/>
<rect x="256" y="328" width="8" height="8" fill="#a5d5ec"/>
<rect x="264" y="328" width="8" height="8" fill="#a5d5ec"/>
<rect x="272" y="328" width="8" height="8" fill="#a5d5ec"/>
<rect x="280" y="328" width="8" height="8" fill="#a5d5ec"/>
<rect x="288" y="328" width="8" height="8" fill="#a5d5ec"/>
<rect x="296" y="328" width="8" height="8" fill="#a5d5ec"/>
<rect x="304" y="328" width="8" height="8" fill="#a5d5ec"/>
<rect x="312" y="328" width="8" height="8" fill="#a5d5ec"/>
<rect x="320" y="328" width="8" height="8" fill="#a5d5ec"/>
<rect x="328" y="328" width="8" height="8" fill="#a5d5ec"/>
<rect x="336" y="328" width="8" height="8" fill="#a5d5ec"/>
<rect x="344" y="328" width="8" height="8" fill="#a5d5ec"/>
<rect x="352" y="328" width="8" height="8" fill="#a5d5ec"/>
<rect x="360" y="328" width="8" height="8" fill="#a5d5ec"/>
<rect x="368" y="328" width="8" height="8" fill="#a5d5ec"/>
<rect x="376" y="328" width="8" height="8" fill="#a5d5ec"/>
<rect x="384" y="328" width="8" height="8" fill="#e8eef0"/>
<rect x="392" y="328" width="8" height="8" fill="#eeeeee"/>
<rect x="400" y="328" width="8" height="8" fill="#eeeeee"/>
<rect x="408" y="328" width="8" height="8" fill="#eeeeee"/>
<rect x="416" y="328" width="8" height="8" fill="#f6f6f6"/>
<rect x="232" y="336" width="8" height="8" fill="#d8d8d8"/>
<rect x="240" y="336" width="8" height="8" fill="#e0e0e0"/>
<rect x="248" y="336" width="8" height="8" fill="#e0e0e0"/>
<rect x="256" y="336" width="8" height="8" fill="#d4d4d4"/>
<rect x="264" y="336" width="8" height="8" fill="#d0d0d0"/>
<rect x="272" y="336" width="8" height="8" fill="#d4d4d4"/>
<rect x="280" y="336" width="8" height="8" fill="#dcdcdc"/>
<rect x="288" y="336" width="8" height="8" fill="#e4e4e4"/>
<rect x="296" y="336" width="8" height="8" fill="#e4e4e4"/>
<rect x="304" y="336" width="8" height="8" fill="#e0e0e0"/>
<rect x="312" y="336" width="8" height="8" fill="#dcdcdc"/>
<rect x="320" y="336" width="8" height="8" fill="#dcdcdc"/>
<rect x="328" y="336" width="8" height="8" fill="#eeeeee"/>
<rect x="336" y="336" width="8" height="8" fill="#cccccc"/>
<rect x="344" y="336" width="8" height="8" fill="#eeeeee"/>
<rect x="232" y="344" width="8" height="8" fill="#f6f6f6"/>
<rect x="240" y="344" width="8" height="8" fill="#f6f6f6"/>
<rect x="248" y="344" width="8" height="8" fill="#f6f6f6"/>
<rect x="256" y="344" width="8" height="8" fill="#f4f4f4"/>
<rect x="264" y="344" width="8" height="8" fill="#f4f4f4"/>
<rect x="272" y="344" width="8" height="8" fill="#f4f4f4"/>
<rect x="280" y="344" width="8" height="8" fill="#f6f6f6"/>
<rect x="288" y="344" width="8" height="8" fill="#f8f8f8"/>
<rect x="296" y="344" width="8" height="8" fill="#f8f8f8"/>
<rect x="304" y="344" width="8" height="8" fill="#f0f0f0"/>
<rect x="312" y="344" width="8" height="8" fill="#f0f0f0"/>
<rect x="320" y="344" width="8" height="8" fill="#f8f8f8"/>
<rect x="328" y="344" width="8" height="8" fill="#f4f4f4"/>
<rect x="336" y="344" width="8" height="8" fill="#f8f8f8"/>
<rect x="192" y="376" width="8" height="8" fill="#fafafa"/>
<rect x="200" y="376" width="8" height="8" fill="#fafafa"/>
<rect x="208" y="376" width="8" height="8" fill="#fafafa"/>
<rect x="176" y="384" width="8" height="8" fill="#f0f0f0"/>
<rect x="184" y="384" width="8" height="8" fill="#d8d8d8"/>
<rect x="192" y="384" width="8" height="8" fill="#e0e0e0"/>
<rect x="200" y="384" width="8" height="8" fill="#e0e0e0"/>
<rect x="208" y="384" width="8" height="8" fill="#e0e0e0"/>
<rect x="216" y="384" width="8" height="8" fill="#d5d5d5"/>
<rect x="176" y="392" width="8" height="8" fill="#eeeeee"/>
<rect x="184" y="392" width="8" height="8" fill="#5f6360"/>
<rect x="192" y="392" width="8" height="8" fill="#5f6360"/>
<rect x="200" y="392" width="8" height="8" fill="#bbbbbb"/>
<rect x="208" y="392" width="8" height="8" fill="#bbbbbb"/>
<rect x="216" y="392" width="8" height="8" fill="#d5d5d5"/>
<rect x="192" y="400" width="8" height="7" fill="#e0e0e0"/>
<rect x="200" y="400" width="8" height="7" fill="#e8e8e8"/>
<rect x="232" y="360" width="8" height="8" fill="#c8c8c8"/>
<rect x="240" y="360" width="8" height="8" fill="#b8b8bc"/>
<rect x="248" y="360" width="8" height="8" fill="#c8c8c8"/>
<rect x="256" y="360" width="8" height="8" fill="#bcbcbc"/>
<rect x="264" y="360" width="8" height="8" fill="#acacb0"/>
<rect x="272" y="360" width="8" height="8" fill="#e4e4e4"/>
<rect x="280" y="360" width="8" height="8" fill="#b4b4b8"/>
<rect x="288" y="360" width="8" height="8" fill="#dce0e4"/>
<rect x="232" y="368" width="8" height="8" fill="#e4e4e4"/>
<rect x="240" y="368" width="8" height="8" fill="#e0e0e0"/>
<rect x="248" y="368" width="8" height="8" fill="#e4e4e4"/>
<rect x="256" y="368" width="8" height="8" fill="#e0e0e0"/>
<rect x="264" y="368" width="8" height="8" fill="#dcdcdc"/>
<rect x="272" y="368" width="8" height="8" fill="#eeeeee"/>
<rect x="280" y="368" width="8" height="8" fill="#e0e0e0"/>
<rect x="288" y="368" width="8" height="8" fill="#ececec"/>
<rect x="296" y="368" width="8" height="8" fill="#f6f6f6"/>
<rect x="304" y="368" width="8" height="8" fill="#f6f6f6"/>
<rect x="312" y="368" width="8" height="8" fill="#f6f6f6"/>
<rect x="320" y="368" width="8" height="8" fill="#f6f6f6"/>
<rect x="328" y="368" width="8" height="8" fill="#f6f6f6"/>
<rect x="336" y="368" width="8" height="8" fill="#f6f6f6"/>
<rect x="344" y="368" width="8" height="8" fill="#f6f6f6"/>
<rect x="352" y="368" width="8" height="8" fill="#f6f6f6"/>
<rect x="360" y="368" width="8" height="8" fill="#f6f6f6"/>
<rect x="368" y="368" width="8" height="8" fill="#f6f6f6"/>
<rect x="376" y="368" width="8" height="8" fill="#f6f6f6"/>
<rect x="384" y="368" width="8" height="8" fill="#f6f6f6"/>
<rect x="392" y="368" width="8" height="8" fill="#f6f6f6"/>
<rect x="400" y="368" width="8" height="8" fill="#f6f6f6"/>
<rect x="408" y="368" width="8" height="8" fill="#f6f6f6"/>
<rect x="416" y="368" width="8" height="8" fill="#f6f6f6"/>
<rect x="224" y="376" width="8" height="8" fill="#f8f8f8"/>
<rect x="232" y="376" width="8" height="8" fill="#dc2626"/>
<rect x="240" y="376" width="8" height="8" fill="#dc2626"/>
<rect x="248" y="376" width="8" height="8" fill="#dc2626"/>
<rect x="256" y="376" width="8" height="8" fill="#dc2626"/>
<rect x="264" y="376" width="8" height="8" fill="#dc2626"/>
<rect x="272" y="376" width="8" height="8" fill="#dc2626"/>
<rect x="280" y="376" width="8" height="8" fill="#dc2626"/>
<rect x="288" y="376" width="8" height="8" fill="#dc2626"/>
<rect x="296" y="376" width="8" height="8" fill="#dc2626"/>
<rect x="304" y="376" width="8" height="8" fill="#dc2626"/>
<rect x="312" y="376" width="8" height="8" fill="#dc2626"/>
<rect x="320" y="376" width="8" height="8" fill="#dc2626"/>
<rect x="328" y="376" width="8" height="8" fill="#dc2626"/>
<rect x="336" y="376" width="8" height="8" fill="#dc2626"/>
<rect x="344" y="376" width="8" height="8" fill="#dc2626"/>
<rect x="352" y="376" width="8" height="8" fill="#dc2626"/>
<rect x="360" y="376" width="8" height="8" fill="#dc2626"/>
<rect x="368" y="376" width="8" height="8" fill="#dc2626"/>
<rect x="376" y="376" width="8" height="8" fill="#dc2626"/>
<rect x="384" y="376" width="8" height="8" fill="#dc2626"/>
<rect x="392" y="376" width="8" height="8" fill="#dc2626"/>
<rect x="400" y="376" width="8" height="8" fill="#e08080"/>
<rect x="408" y="376" width="8" height="8" fill="#e8e8e8"/>
<rect x="416" y="376" width="8" height="8" fill="#f2f2f2"/>
<rect x="224" y="384" width="8" height="8" fill="#fafafa"/>
<rect x="232" y="384" width="8" height="8" fill="#eba5a5"/>
<rect x="240" y="384" width="8" height="8" fill="#eba5a5"/>
<rect x="248" y="384" width="8" height="8" fill="#eba5a5"/>
<rect x="256" y="384" width="8" height="8" fill="#eba5a5"/>
<rect x="264" y="384" width="8" height="8" fill="#eba5a5"/>
<rect x="272" y="384" width="8" height="8" fill="#eba5a5"/>
<rect x="280" y="384" width="8" height="8" fill="#eba5a5"/>
<rect x="288" y="384" width="8" height="8" fill="#eba5a5"/>
<rect x="296" y="384" width="8" height="8" fill="#eba5a5"/>
<rect x="304" y="384" width="8" height="8" fill="#eba5a5"/>
<rect x="312" y="384" width="8" height="8" fill="#eba5a5"/>
<rect x="320" y="384" width="8" height="8" fill="#eba5a5"/>
<rect x="328" y="384" width="8" height="8" fill="#eba5a5"/>
<rect x="336" y="384" width="8" height="8" fill="#eba5a5"/>
<rect x="344" y="384" width="8" height="8" fill="#eba5a5"/>
<rect x="352" y="384" width="8" height="8" fill="#eba5a5"/>
<rect x="360" y="384" width="8" height="8" fill="#eba5a5"/>
<rect x="368" y="384" width="8" height="8" fill="#eba5a5"/>
<rect x="376" y="384" width="8" height="8" fill="#eba5a5"/>
<rect x="384" y="384" width="8" height="8" fill="#eba5a5"/>
<rect x="392" y="384" width="8" height="8" fill="#eba5a5"/>
<rect x="400" y="384" width="8" height="8" fill="#f0d0d0"/>
<rect x="408" y="384" width="8" height="8" fill="#eeeeee"/>
<rect x="416" y="384" width="8" height="8" fill="#f6f6f6"/>
<rect x="232" y="392" width="8" height="8" fill="#d8d8d8"/>
<rect x="240" y="392" width="8" height="8" fill="#e0e0e0"/>
<rect x="248" y="392" width="8" height="8" fill="#e0e0e0"/>
<rect x="256" y="392" width="8" height="8" fill="#d4d4d4"/>
<rect x="264" y="392" width="8" height="8" fill="#d0d0d0"/>
<rect x="272" y="392" width="8" height="8" fill="#d4d4d4"/>
<rect x="280" y="392" width="8" height="8" fill="#dcdcdc"/>
<rect x="288" y="392" width="8" height="8" fill="#e4e4e4"/>
<rect x="296" y="392" width="8" height="8" fill="#e4e4e4"/>
<rect x="304" y="392" width="8" height="8" fill="#e8e8e8"/>
<rect x="312" y="392" width="8" height="8" fill="#d0d0d0"/>
<rect x="320" y="392" width="8" height="8" fill="#cccccc"/>
<rect x="328" y="392" width="8" height="8" fill="#e8e8e8"/>
<rect x="336" y="392" width="8" height="8" fill="#cccccc"/>
<rect x="344" y="392" width="8" height="8" fill="#eeeeee"/>
<rect x="232" y="400" width="8" height="7" fill="#f6f6f6"/>
<rect x="240" y="400" width="8" height="7" fill="#f6f6f6"/>
<rect x="248" y="400" width="8" height="7" fill="#f6f6f6"/>
<rect x="256" y="400" width="8" height="7" fill="#f4f4f4"/>
<rect x="264" y="400" width="8" height="7" fill="#f4f4f4"/>
<rect x="272" y="400" width="8" height="7" fill="#f4f4f4"/>
<rect x="280" y="400" width="8" height="7" fill="#f6f6f6"/>
<rect x="288" y="400" width="8" height="7" fill="#f8f8f8"/>
<rect x="296" y="400" width="8" height="7" fill="#f8f8f8"/>
<rect x="304" y="400" width="8" height="7" fill="#f8f8f8"/>
<rect x="312" y="400" width="8" height="7" fill="#f0f0f0"/>
<rect x="320" y="400" width="8" height="7" fill="#f0f0f0"/>
<rect x="328" y="400" width="8" height="7" fill="#f8f8f8"/>
<rect x="336" y="400" width="8" height="7" fill="#f2f2f2"/>
<rect x="184" y="496" width="8" height="8" fill="#fce28c"/>
<rect x="192" y="496" width="8" height="8" fill="#fce28c"/>
<rect x="200" y="496" width="8" height="8" fill="#dfe6c8"/>
<rect x="208" y="496" width="8" height="8" fill="#8fc3dc"/>
<rect x="216" y="496" width="8" height="8" fill="#c5dfe8"/>
<rect x="184" y="504" width="8" height="8" fill="#fbdd80"/>
<rect x="192" y="504" width="8" height="8" fill="#fbdd80"/>
<rect x="200" y="504" width="8" height="8" fill="#7fbfe0"/>
<rect x="208" y="504" width="8" height="8" fill="#4fa5d8"/>
<rect x="216" y="504" width="8" height="8" fill="#6aa0c0"/>
<rect x="184" y="512" width="8" height="8" fill="#fbdd80"/>
<rect x="192" y="512" width="8" height="8" fill="#fbdd80"/>
<rect x="200" y="512" width="8" height="8" fill="#9cc5b8"/>
<rect x="208" y="512" width="8" height="8" fill="#7fb0cc"/>
<rect x="216" y="512" width="8" height="8" fill="#5e93b0"/>
<rect x="184" y="520" width="8" height="8" fill="#fbdd80"/>
<rect x="192" y="520" width="8" height="8" fill="#fbdd80"/>
<rect x="200" y="520" width="8" height="8" fill="#fbdd80"/>
<rect x="208" y="520" width="8" height="8" fill="#e8eeee"/>
<rect x="176" y="528" width="8" height="8" fill="#eef0ee"/>
<rect x="184" y="528" width="8" height="8" fill="#a5dca0"/>
<rect x="192" y="528" width="8" height="8" fill="#9fdc9a"/>
<rect x="200" y="528" width="8" height="8" fill="#5fc860"/>
<rect x="208" y="528" width="8" height="8" fill="#c5e0cc"/>
<rect x="184" y="536" width="8" height="8" fill="#e5ece5"/>
<rect x="192" y="536" width="8" height="8" fill="#a5dca5"/>
<rect x="200" y="536" width="8" height="8" fill="#b5d8c0"/>
<rect x="208" y="536" width="8" height="8" fill="#ebebeb"/>
<rect x="232" y="504" width="8" height="8" fill="#c8c8c8"/>
<rect x="240" y="504" width="8" height="8" fill="#e0e0e0"/>
<rect x="248" y="504" width="8" height="8" fill="#e4e4e4"/>
<rect x="256" y="504" width="8" height="8" fill="#d4d4d4"/>
<rect x="264" y="504" width="8" height="8" fill="#e0e0e0"/>
<rect x="272" y="504" width="8" height="8" fill="#e4e4e4"/>
<rect x="280" y="504" width="8" height="8" fill="#dcd8d8"/>
<rect x="288" y="504" width="8" height="8" fill="#e4e4e4"/>
<rect x="296" y="504" width="8" height="8" fill="#e0dce0"/>
<rect x="304" y="504" width="8" height="8" fill="#ececec"/>
<rect x="312" y="504" width="8" height="8" fill="#ececec"/>
<rect x="320" y="504" width="8" height="8" fill="#ececec"/>
<rect x="232" y="512" width="8" height="8" fill="#d8d8d8"/>
<rect x="240" y="512" width="8" height="8" fill="#d0d0d0"/>
<rect x="248" y="512" width="8" height="8" fill="#c8c4c4"/>
<rect x="256" y="512" width="8" height="8" fill="#d0d0d0"/>
<rect x="264" y="512" width="8" height="8" fill="#d0d0d0"/>
<rect x="272" y="512" width="8" height="8" fill="#d0d0d0"/>
<rect x="280" y="512" width="8" height="8" fill="#c8c0c0"/>
<rect x="288" y="512" width="8" height="8" fill="#dcdcdc"/>
<rect x="296" y="512" width="8" height="8" fill="#d4d4d4"/>
<rect x="304" y="512" width="8" height="8" fill="#c4c4c8"/>
<rect x="312" y="512" width="8" height="8" fill="#dcdcdc"/>
<rect x="320" y="512" width="8" height="8" fill="#e4e4e4"/>
<rect x="232" y="552" width="8" height="8" fill="#e4e4e4"/>
<rect x="240" y="552" width="8" height="8" fill="#ececec"/>
<rect x="248" y="552" width="8" height="8" fill="#e8e8e8"/>
<rect x="256" y="552" width="8" height="8" fill="#f0f0f0"/>
<rect x="264" y="552" width="8" height="8" fill="#e8e8e8"/>
<rect x="272" y="552" width="8" height="8" fill="#f0f0f0"/>
<rect x="280" y="552" width="8" height="8" fill="#e8e8e8"/>
<rect x="288" y="552" width="8" height="8" fill="#eeeeee"/>
<rect x="296" y="552" width="8" height="8" fill="#e4e4e8"/>
<rect x="304" y="552" width="8" height="8" fill="#eeeeee"/>
<rect x="312" y="552" width="8" height="8" fill="#e4e4e8"/>
<rect x="320" y="552" width="8" height="8" fill="#ececec"/>
<rect x="328" y="552" width="8" height="8" fill="#ececec"/>
<rect x="336" y="552" width="8" height="8" fill="#ececec"/>
<rect x="344" y="552" width="8" height="8" fill="#ececec"/>
<rect x="352" y="552" width="8" height="8" fill="#ececec"/>
<rect x="360" y="552" width="8" height="8" fill="#dcdcdc"/>
<rect x="368" y="552" width="8" height="8" fill="#f2f2f6"/>
<rect x="232" y="560" width="8" height="8" fill="#c8c8c8"/>
<rect x="240" y="560" width="8" height="8" fill="#bcb8bc"/>
<rect x="248" y="560" width="8" height="8" fill="#c8ccd0"/>
<rect x="256" y="560" width="8" height="8" fill="#d8d8d8"/>
<rect x="264" y="560" width="8" height="8" fill="#d0d0d4"/>
<rect x="272" y="560" width="8" height="8" fill="#bcb8bc"/>
<rect x="280" y="560" width="8" height="8" fill="#d0d0d0"/>
<rect x="288" y="560" width="8" height="8" fill="#d0d0d0"/>
<rect x="296" y="560" width="8" height="8" fill="#d0d0d0"/>
<rect x="304" y="560" width="8" height="8" fill="#b8b8c4"/>
<rect x="312" y="560" width="8" height="8" fill="#d8d4d4"/>
<rect x="320" y="560" width="8" height="8" fill="#c4c4c8"/>
<rect x="328" y="560" width="8" height="8" fill="#d0d0d0"/>
<rect x="336" y="560" width="8" height="8" fill="#cccccc"/>
<rect x="344" y="560" width="8" height="8" fill="#d0d0d0"/>
<rect x="352" y="560" width="8" height="8" fill="#d4d0d0"/>
<rect x="360" y="560" width="8" height="8" fill="#dcdcdc"/>
<rect x="368" y="560" width="8" height="8" fill="#e4e4e8"/>
<rect x="184" y="568" width="8" height="8" fill="#f4f4f4"/>
<rect x="192" y="568" width="8" height="8" fill="#f0f0f4"/>
<rect x="200" y="568" width="8" height="8" fill="#f0f0f4"/>
<rect x="208" y="568" width="8" height="8" fill="#f4f4f8"/>
<rect x="216" y="568" width="8" height="8" fill="#eef2f8"/>
<rect x="224" y="568" width="8" height="8" fill="#eef2f8"/>
<rect x="232" y="568" width="8" height="8" fill="#60b8e4"/>
<rect x="240" y="568" width="8" height="8" fill="#60b8e4"/>
<rect x="248" y="568" width="8" height="8" fill="#60b8e4"/>
<rect x="256" y="568" width="8" height="8" fill="#60b8e4"/>
<rect x="264" y="568" width="8" height="8" fill="#60b8e4"/>
<rect x="272" y="568" width="8" height="8" fill="#60b8e4"/>
<rect x="280" y="568" width="8" height="8" fill="#d8e4e8"/>
<rect x="288" y="568" width="8" height="8" fill="#e8e8e8"/>
<rect x="296" y="568" width="8" height="8" fill="#e8e8e8"/>
<rect x="304" y="568" width="8" height="8" fill="#e8e8e8"/>
<rect x="312" y="568" width="8" height="8" fill="#e8e8e8"/>
<rect x="320" y="568" width="8" height="8" fill="#e8e8e8"/>
<rect x="328" y="568" width="8" height="8" fill="#e8e8e8"/>
<rect x="336" y="568" width="8" height="8" fill="#e8e8e8"/>
<rect x="344" y="568" width="8" height="8" fill="#e8e8e8"/>
<rect x="352" y="568" width="8" height="8" fill="#e8e8e8"/>
<rect x="360" y="568" width="8" height="8" fill="#e8e8e8"/>
<rect x="368" y="568" width="8" height="8" fill="#e8e8e8"/>
<rect x="376" y="568" width="8" height="8" fill="#e8e8e8"/>
<rect x="384" y="568" width="8" height="8" fill="#e8e8e8"/>
<rect x="392" y="568" width="8" height="8" fill="#e8e8e8"/>
<rect x="400" y="568" width="8" height="8" fill="#e8e8e8"/>
<rect x="408" y="568" width="8" height="8" fill="#e8e8e8"/>
<rect x="416" y="568" width="8" height="8" fill="#f0f0f0"/>
<rect x="176" y="576" width="8" height="8" fill="#f6f6f6"/>
<rect x="184" y="576" width="8" height="8" fill="#666666"/>
<rect x="192" y="576" width="8" height="8" fill="#999999"/>
<rect x="200" y="576" width="8" height="8" fill="#d0d0d8"/>
<rect x="208" y="576" width="8" height="8" fill="#c5c5c5"/>
<rect x="216" y="576" width="8" height="8" fill="#bbbbbb"/>
<rect x="224" y="576" width="8" height="8" fill="#dde0ea"/>
<rect x="232" y="576" width="8" height="8" fill="#45a5dc"/>
<rect x="240" y="576" width="8" height="8" fill="#45a5dc"/>
<rect x="248" y="576" width="8" height="8" fill="#45a5dc"/>
<rect x="256" y="576" width="8" height="8" fill="#45a5dc"/>
<rect x="264" y="576" width="8" height="8" fill="#45a5dc"/>
<rect x="272" y="576" width="8" height="8" fill="#45a5dc"/>
<rect x="280" y="576" width="8" height="8" fill="#d8e0e4"/>
<rect x="288" y="576" width="8" height="8" fill="#e6e6e6"/>
<rect x="296" y="576" width="8" height="8" fill="#e6e6e6"/>
<rect x="304" y="576" width="8" height="8" fill="#e6e6e6"/>
<rect x="312" y="576" width="8" height="8" fill="#e6e6e6"/>
<rect x="320" y="576" width="8" height="8" fill="#e6e6e6"/>
<rect x="328" y="576" width="8" height="8" fill="#e6e6e6"/>
<rect x="336" y="576" width="8" height="8" fill="#e6e6e6"/>
<rect x="344" y="576" width="8" height="8" fill="#e6e6e6"/>
<rect x="352" y="576" width="8" height="8" fill="#e6e6e6"/>
<rect x="360" y="576" width="8" height="8" fill="#e6e6e6"/>
<rect x="368" y="576" width="8" height="8" fill="#e6e6e6"/>
<rect x="376" y="576" width="8" height="8" fill="#e6e6e6"/>
<rect x="384" y="576" width="8" height="8" fill="#e6e6e6"/>
<rect x="392" y="576" width="8" height="8" fill="#e6e6e6"/>
<rect x="400" y="576" width="8" height="8" fill="#e6e6e6"/>
<rect x="408" y="576" width="8" height="8" fill="#e6e6e6"/>
<rect x="416" y="576" width="8" height="8" fill="#eeeeee"/>
<rect x="176" y="584" width="8" height="8" fill="#e8f0e8"/>
<rect x="184" y="584" width="8" height="8" fill="#8fc898"/>
<rect x="192" y="584" width="8" height="8" fill="#5f9f6a"/>
<rect x="200" y="584" width="8" height="8" fill="#80b090"/>
<rect x="208" y="584" width="8" height="8" fill="#d0d0d0"/>
<rect x="232" y="584" width="8" height="8" fill="#eeeeee"/>
<rect x="240" y="584" width="8" height="8" fill="#e8e8e8"/>
<rect x="248" y="584" width="8" height="8" fill="#eeeeee"/>
<rect x="256" y="584" width="8" height="8" fill="#ececec"/>
<rect x="264" y="584" width="8" height="8" fill="#eeeeee"/>
<rect x="272" y="584" width="8" height="8" fill="#e8e8e8"/>
<rect x="280" y="584" width="8" height="8" fill="#f0f0f0"/>
<rect x="288" y="584" width="8" height="8" fill="#f4f4f4"/>
<rect x="296" y="584" width="8" height="8" fill="#f2f2f2"/>
<rect x="304" y="584" width="8" height="8" fill="#e0e0e4"/>
<rect x="312" y="584" width="8" height="8" fill="#eeeeee"/>
<rect x="320" y="584" width="8" height="8" fill="#f0f0f0"/>
<rect x="328" y="584" width="8" height="8" fill="#e0e0e0"/>
<rect x="336" y="584" width="8" height="8" fill="#f4f4f4"/>
<rect x="184" y="592" width="8" height="8" fill="#e5ece5"/>
<rect x="192" y="592" width="8" height="8" fill="#a5dca5"/>
<rect x="200" y="592" width="8" height="8" fill="#b8dcc0"/>
<rect x="208" y="592" width="8" height="8" fill="#eeeeee"/>
<rect x="232" y="592" width="8" height="8" fill="#f4f4f4"/>
<rect x="240" y="592" width="8" height="8" fill="#f0f0f0"/>
<rect x="248" y="592" width="8" height="8" fill="#f0f0f0"/>
<rect x="256" y="592" width="8" height="8" fill="#f4f4f4"/>
<rect x="264" y="592" width="8" height="8" fill="#f0f0f0"/>
<rect x="272" y="592" width="8" height="8" fill="#f0f0f0"/>
<rect x="280" y="592" width="8" height="8" fill="#f0f0f0"/>
<rect x="288" y="592" width="8" height="8" fill="#e4e4e4"/>
<rect x="296" y="592" width="8" height="8" fill="#f4f4f4"/>
<rect x="304" y="592" width="8" height="8" fill="#f4f4f4"/>
<rect x="312" y="592" width="8" height="8" fill="#f0f0f0"/>
<rect x="320" y="592" width="8" height="8" fill="#eeeeee"/>
<rect x="328" y="592" width="8" height="8" fill="#eeeeee"/>
<rect x="336" y="592" width="8" height="8" fill="#f0f0f0"/>
</svg>

<!-- status bar -->
<div class="t" style="left:16px;top:610px;color:#1f2a4d;letter-spacing:-0.208px">12 items</div>
<div class="t" style="left:80px;top:610px;color:#1f2a4d;letter-spacing:-0.123px">1 item selected</div>
<div class="line" style="left:69px;top:609px;width:1px;height:17px;background:#f0f0f0"></div>
<div class="line" style="left:170px;top:609px;width:1px;height:17px;background:#f0f0f0"></div>
<svg style="left:615px;top:606px" width="50" height="22" viewBox="615 606 50 22">
<g fill="none" stroke="#9a9a9a" stroke-width="0.7"><rect x="621.4" y="610.4" width="3.4" height="3.6"/><rect x="621.4" y="614.4" width="3.4" height="3.6"/><rect x="621.4" y="618.4" width="3.4" height="3.6"/></g>
<g fill="#6a6a6a"><rect x="627" y="611.8" width="4" height="1"/><rect x="633" y="611.8" width="4" height="1"/><rect x="627" y="615.8" width="4" height="1"/><rect x="633" y="615.8" width="4" height="1"/><rect x="627" y="619.8" width="4" height="1"/><rect x="633" y="619.8" width="4" height="1"/></g>
<rect x="622.6" y="619.8" width="1" height="1" fill="#c03060"/><rect x="622.6" y="611.8" width="1" height="1" fill="#4060a0"/><rect x="622.6" y="615.8" width="1" height="1" fill="#40a070"/>
<rect x="644.4" y="611.4" width="13.2" height="10.2" fill="#fff" stroke="#8a8a8a" stroke-width="0.8"/>
<rect x="646" y="613" width="10" height="7" fill="#8cc0e8"/>
<path d="M646 617 C648 614.6 650 614.6 652 616 L656 617.6 V620 H646 Z" fill="#3f6f88"/>
</svg>

<!-- borders -->
<div id="bl" class="abs"></div>
<div id="br" class="abs"></div>
<div id="bb" class="abs"></div>
</div>
</body>
</html>
